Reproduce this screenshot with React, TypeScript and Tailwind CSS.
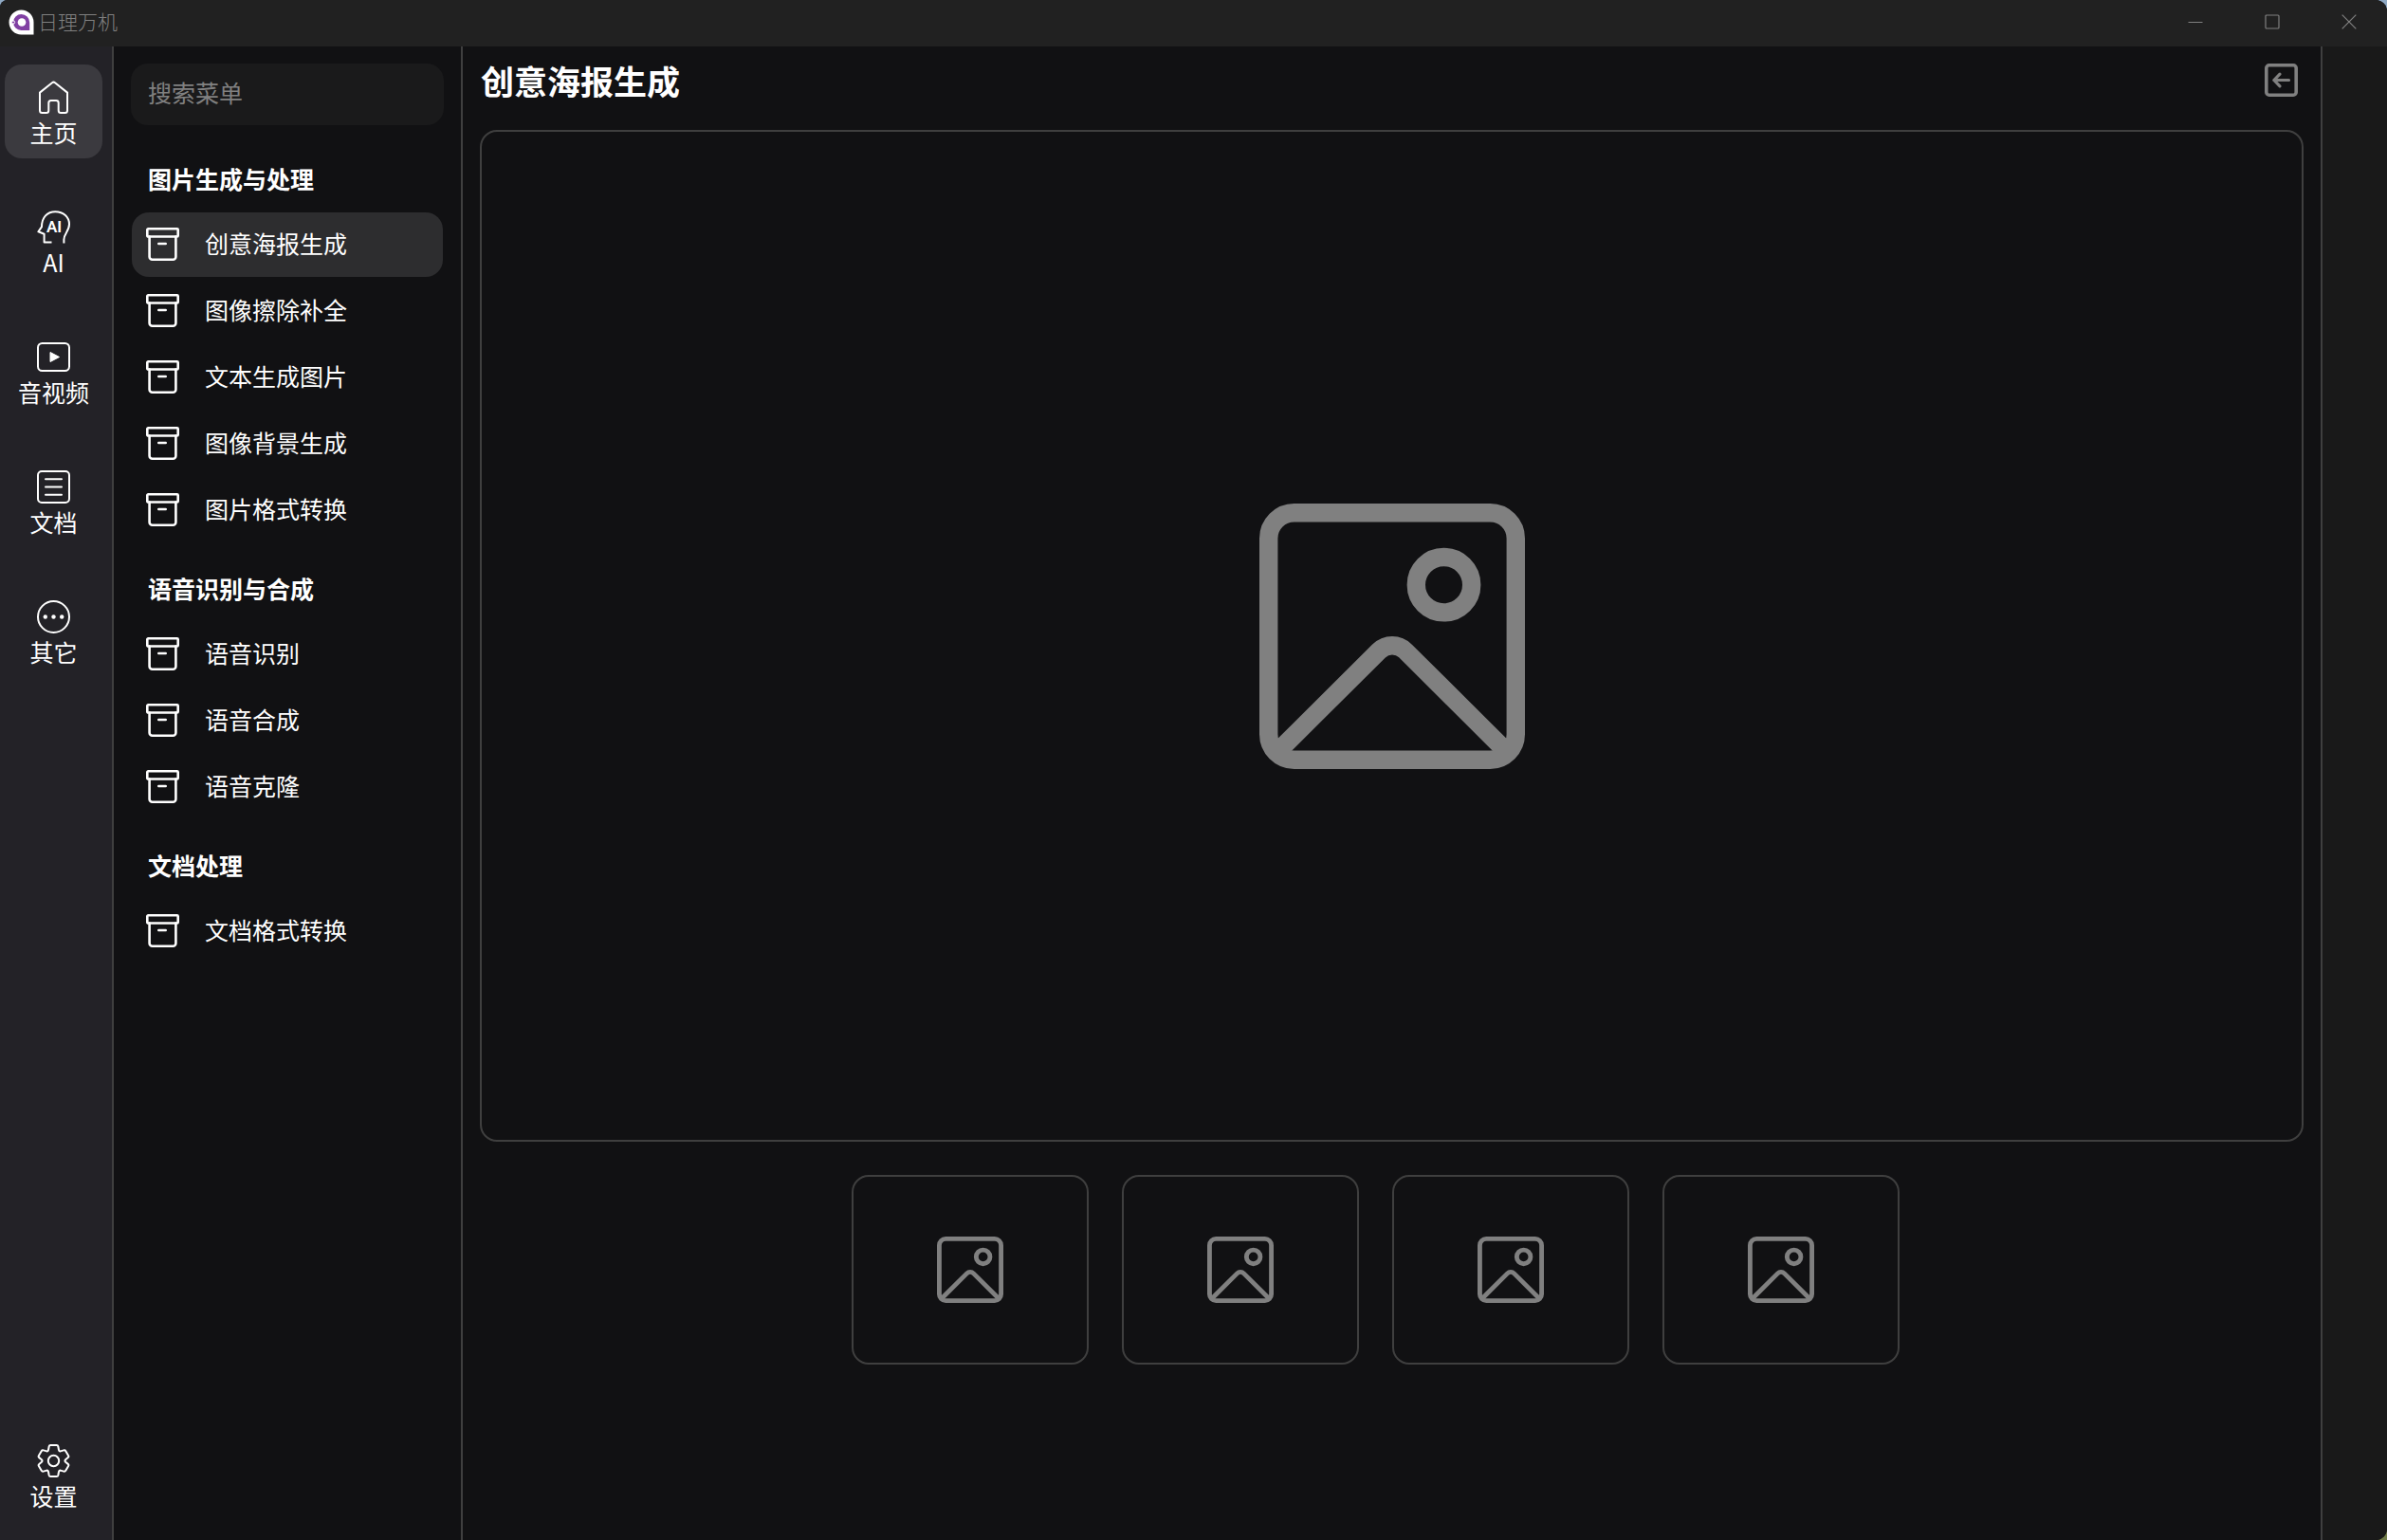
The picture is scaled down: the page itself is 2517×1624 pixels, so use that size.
import React from "react";

function HomeIcon() {
  return (
    <svg viewBox="0 0 35 35" className="size-[35px]" fill="none" stroke="currentColor" strokeWidth="2" strokeLinejoin="round" aria-hidden="true">
      <path d="M3 12.6 16 2.2q1.5-1.2 3 0L32 12.6V31.500a2.500 2.500 0 0 1-2.500 2.500h-4.300a2.500 2.500 0 0 1-2.500-2.500V23.500a2.500 2.500 0 0 0-2.500-2.500h-5.400a2.500 2.500 0 0 0-2.500 2.500V31.500a2.500 2.500 0 0 1-2.500 2.500H5.500A2.500 2.500 0 0 1 3 31.500Z" />
    </svg>
  );
}

function AiIcon() {
  return (
    <svg viewBox="0 0 35 35" className="size-[35px]" fill="none" stroke="currentColor" strokeWidth="2" strokeLinejoin="round" aria-hidden="true">
      <path d="M15.500 33.500H7.600V24.700L1.400 22.300 5 17.200C5 7 11 1.200 19.300 1.200 28 1.200 34 7 34 14.500c0 7-5.600 10-5.600 16v4" />
      <text x="18" y="23" textAnchor="middle" fontSize="17" fontWeight="600" fill="currentColor" stroke="none" fontFamily="Roboto, sans-serif">AI</text>
    </svg>
  );
}

function VideoIcon() {
  return (
    <svg viewBox="0 0 35 35" className="size-[35px]" fill="none" stroke="currentColor" strokeWidth="2" strokeLinejoin="round" aria-hidden="true">
      <rect x="1" y="3" width="33" height="29" rx="4.500" />
      <path d="M14 12.500 23.500 17.500 14 22.500Z" fill="currentColor" strokeWidth="1" />
    </svg>
  );
}

function DocIcon() {
  return (
    <svg viewBox="0 0 35 35" className="size-[35px]" fill="none" stroke="currentColor" strokeWidth="2" strokeLinecap="round" aria-hidden="true">
      <rect x="1" y="1" width="33" height="33" rx="4" />
      <path d="M9 9.200h17M9 17.500h17M9 25.800h17" />
    </svg>
  );
}

function MoreIcon() {
  return (
    <svg viewBox="0 0 35 35" className="size-[35px]" fill="none" stroke="currentColor" strokeWidth="2" aria-hidden="true">
      <circle cx="17.500" cy="17.500" r="16.500" />
      <g fill="currentColor" stroke="none">
        <circle cx="8.800" cy="17.500" r="2.200" />
        <circle cx="17.500" cy="17.500" r="2.200" />
        <circle cx="26.200" cy="17.500" r="2.200" />
      </g>
    </svg>
  );
}

function GearIcon() {
  return (
    <svg viewBox="0 0 35 35" className="size-[35px]" fill="none" stroke="currentColor" strokeWidth="2" strokeLinejoin="round" aria-hidden="true">
      <path d="M14.300 1h6.400q1.300 0 1.600 1.300l.7 3.700q.3 1.500 1.800 1.400l3.400-1q1.400-.4 2.100.8l2.800 4.800q.7 1.200-.4 2.100l-2.600 2.100q-1.200 1.300 0 2.600l2.600 2.100q1.100.9.4 2.100l-2.800 4.800q-.7 1.200-2.100.8l-3.400-1q-1.500-.1-1.800 1.400l-.7 3.700q-.3 1.300-1.600 1.300h-6.400q-1.300 0-1.600-1.300l-.7-3.700q-.3-1.500-1.800-1.400l-3.400 1q-1.400.4-2.100-.8L1.900 23q-.7-1.200.4-2.100l2.600-2.100q1.200-1.300 0-2.600l-2.600-2.100q-1.100-.9-.4-2.100l2.800-4.800q.7-1.200 2.100-.8l3.400 1q1.500.1 1.800-1.400l.7-3.700q.3-1.300 1.600-1.300Z" />
      <circle cx="17.500" cy="17.500" r="5.700" />
    </svg>
  );
}

function ArchiveIcon() {
  return (
    <svg viewBox="0 0 35 35" className="size-[35px] shrink-0" fill="none" stroke="currentColor" strokeWidth="2.600" strokeLinejoin="round" strokeLinecap="round" aria-hidden="true">
      <rect x="1.300" y="1.300" width="32.400" height="8.200" rx="1" />
      <path d="M3.600 9.500V30.700a3 3 0 0 0 3 3H28.400a3 3 0 0 0 3-3V9.500M13.300 17h7.400" />
    </svg>
  );
}

function ImageIcon({ className }: { className: string }) {
  return (
    <svg viewBox="0 0 280 280" className={className} fill="none" stroke="currentColor" strokeWidth="19.400" aria-hidden="true">
      <rect x="9.700" y="9.700" width="260.600" height="260.600" rx="27" />
      <circle cx="194.500" cy="85.700" r="29.200" />
      <path d="M20 261 126 155.500A19.800 19.800 0 0 1 154 155.500L260 261" />
    </svg>
  );
}

function Logo() {
  return (
    <svg viewBox="0 0 27 27" className="size-[27px] shrink-0" aria-hidden="true">
      <path d="M13.500.5a13 13 0 0 1 13 13v13h-13a13 13 0 0 1 0-26Z" fill="#fff" />
      <path d="M13.500 5a8.700 8.700 0 0 1 8.700 8.700V22h-8.700a8.500 8.500 0 0 1 0-17Z" fill="#8140a3" />
      <circle cx="14" cy="13.500" r="4.300" fill="#fff" />
      <circle cx="5" cy="13.500" r="1.600" fill="#8140a3" stroke="#fff" strokeWidth="1" />
    </svg>
  );
}

const railItems = [
  { label: "主页", Icon: HomeIcon, active: true },
  { label: "AI", Icon: AiIcon, active: false },
  { label: "音视频", Icon: VideoIcon, active: false },
  { label: "文档", Icon: DocIcon, active: false },
  { label: "其它", Icon: MoreIcon, active: false },
];

const groups = [
  { title: "图片生成与处理", items: ["创意海报生成", "图像擦除补全", "文本生成图片", "图像背景生成", "图片格式转换"] },
  { title: "语音识别与合成", items: ["语音识别", "语音合成", "语音克隆"] },
  { title: "文档处理", items: ["文档格式转换"] },
];

function RailButton({ label, Icon, active }: { label: string; Icon: () => React.JSX.Element; active: boolean }) {
  return (
    <button
      type="button"
      className={`flex h-[99px] w-full flex-col items-center rounded-[18px] pt-[17px] text-[25px] leading-8 ${active ? "bg-[#3b3a3f]" : ""}`}
    >
      <Icon />
      <span className="mt-[3px]">{label}</span>
    </button>
  );
}

export default function App() {
  return (
    <div className="bg-linear-to-b from-[#8fa9c4] to-[#6f7a48]">
    <div className="flex min-h-screen flex-col overflow-hidden rounded-tl-lg rounded-r-xl bg-[#111113] font-['Noto_Sans_CJK_SC',sans-serif] text-white">
      <header className="flex h-[49px] items-stretch justify-between bg-[#212121] pb-[3px] pl-[9px] text-[#808080]">
        <div className="flex items-center gap-1">
          <Logo />
          <span className="pb-[3px] text-[21px] leading-7 font-light">日理万机</span>
        </div>
        <div className="flex">
          <button type="button" aria-label="最小化" className="flex w-[81px] items-center justify-center">
            <svg viewBox="0 0 16 16" className="size-4" fill="none" stroke="currentColor" aria-hidden="true">
              <path d="M.5 8.500h15" />
            </svg>
          </button>
          <button type="button" aria-label="最大化" className="flex w-[81px] items-center justify-center">
            <svg viewBox="0 0 16 16" className="size-4" fill="none" stroke="currentColor" strokeWidth="1.200" aria-hidden="true">
              <rect x="1" y="1" width="14" height="14" rx="1" />
            </svg>
          </button>
          <button type="button" aria-label="关闭" className="flex w-[81px] items-center justify-center">
            <svg viewBox="0 0 16 16" className="size-4" fill="none" stroke="currentColor" strokeWidth="1.200" aria-hidden="true">
              <path d="m.7.7 14.600 14.600M15.300.7.7 15.300" />
            </svg>
          </button>
        </div>
      </header>

      <div className="flex grow">
        <nav className="flex w-[120px] shrink-0 flex-col justify-between border-r-2 border-[#3f3f3f] bg-[#232227] pt-[19px] pr-[10px] pb-[19px] pl-[5px]">
          <div className="flex flex-col gap-[38px]">
            {railItems.map((item) => (
              <RailButton key={item.label} {...item} />
            ))}
          </div>
          <RailButton label="设置" Icon={GearIcon} active={false} />
        </nav>

        <aside className="w-[368px] shrink-0 border-r-2 border-[#3f3f3f] px-[18px] pt-[18px]">
          <input
            type="text"
            aria-label="搜索菜单"
            placeholder="搜索菜单"
            className="h-[65px] w-full rounded-[18px] bg-[#1a1a1b] px-[18px] pb-1.5 text-[25px] text-white outline-none placeholder:text-[#808080]"
          />
          <div className="mt-10 flex flex-col gap-8 px-px">
            {groups.map((group) => (
              <section key={group.title}>
                <h2 className="px-[17px] text-[25px] leading-8 font-bold">{group.title}</h2>
                <ul className="mt-5 flex flex-col gap-[2px]">
                  {group.items.map((item) => (
                    <li key={item}>
                      <button
                        type="button"
                        className={`flex h-[68px] w-full items-center gap-[27px] rounded-[18px] px-[15px] pb-px text-[25px] leading-8 ${item === "创意海报生成" ? "bg-[#2d2d2f]" : ""}`}
                      >
                        <ArchiveIcon />
                        <span className="pb-1">{item}</span>
                      </button>
                    </li>
                  ))}
                </ul>
              </section>
            ))}
          </div>
        </aside>

        <main className="flex min-w-0 grow flex-col px-[18px] pt-[18px]">
          <div className="flex items-start justify-between pr-[6px] pl-px">
            <h1 className="text-[35px] leading-[35px] font-bold">创意海报生成</h1>
            <button type="button" aria-label="返回" className="text-[#808080]">
              <svg viewBox="0 0 35 35" className="size-[35px]" fill="none" stroke="currentColor" strokeWidth="3.200" strokeLinecap="round" strokeLinejoin="round" aria-hidden="true">
                <rect x="1.800" y="1.800" width="31.400" height="31.400" rx="3" strokeWidth="3.600" />
                <path d="M25.500 17.500H9.800M16 11.200 9.800 17.500 16 23.800" />
              </svg>
            </button>
          </div>
          <div className="mt-[35px] flex h-[1067px] items-center justify-center rounded-[18px] border-2 border-[#3f3f3f] text-[#808080]">
            <ImageIcon className="size-[280px]" />
          </div>
          <div className="mt-[35px] flex justify-center">
            {[1, 2, 3, 4].map((n) => (
              <button
                key={n}
                type="button"
                aria-label={`图片 ${n}`}
                className="mr-[35px] flex h-[200px] w-[250px] items-center justify-center rounded-[18px] border-2 border-[#3f3f3f] text-[#808080]"
              >
                <ImageIcon className="size-[70px]" />
              </button>
            ))}
          </div>
        </main>

        <aside className="w-[70px] shrink-0 border-l-2 border-[#3f3f3f] bg-[#191919]" />
      </div>
    </div>
    </div>
  );
}
